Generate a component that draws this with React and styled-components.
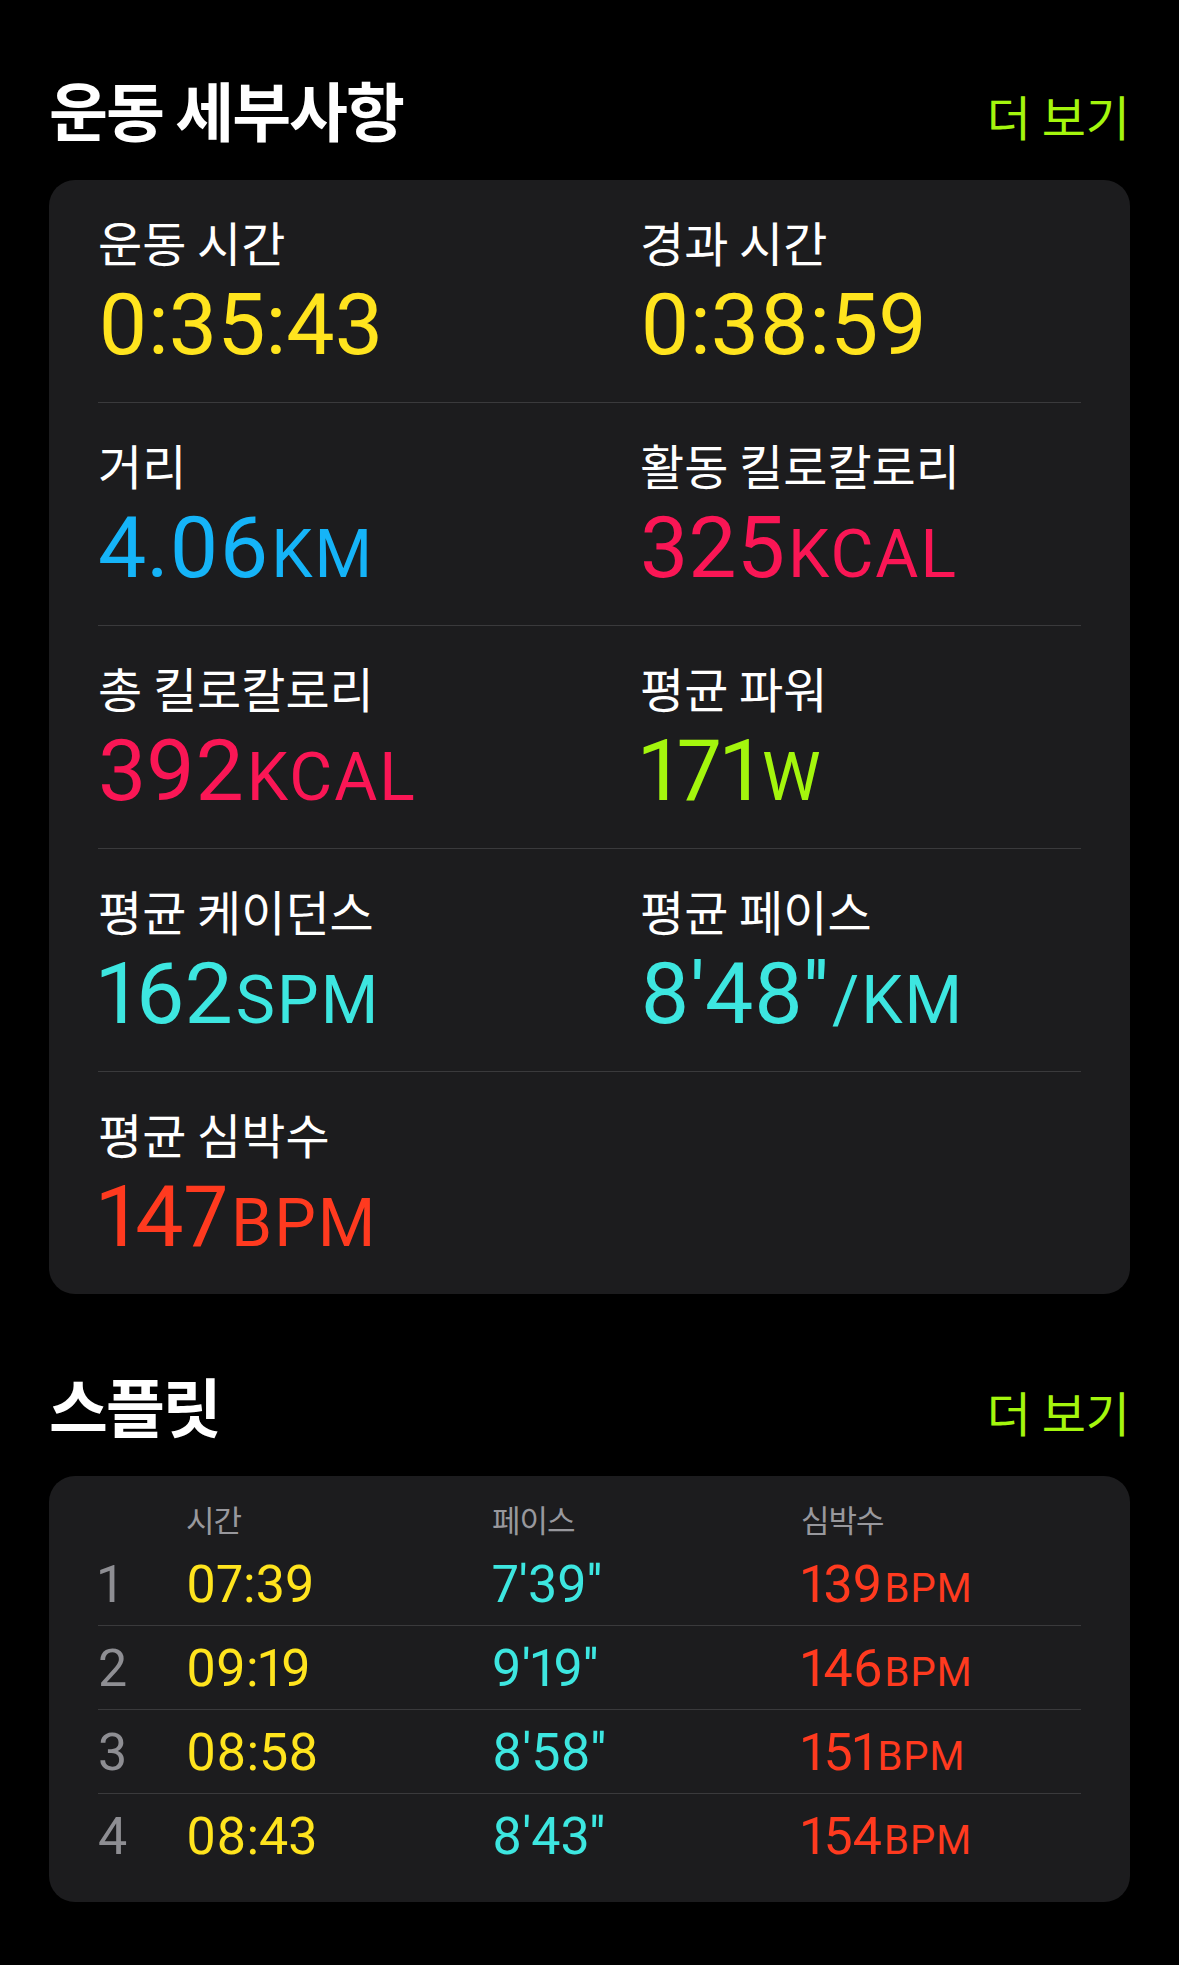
import React from "react";
import styled, { createGlobalStyle } from "styled-components";

const GlobalStyle = createGlobalStyle`
  html, body {
    margin: 0;
    padding: 0;
    background: #000;
  }
  body {
    font-family: "Noto Sans CJK KR", "Noto Sans", sans-serif;
    color: #fff;
    -webkit-font-smoothing: antialiased;
  }
`;

const COLORS = {
  yellow: "#FFE41E",
  blue: "#15B4F8",
  pink: "#FA1655",
  lime: "#A4F60D",
  cyan: "#3DE6E0",
  red: "#FF3A1F",
};

const Page = styled.div`
  width: 1179px;
  min-height: 1965px;
  box-sizing: border-box;
  padding: 70px 49px 0 49px;
  background: #000;
`;

const Section = styled.section`
  display: flex;
  flex-direction: column;
  gap: 34px;
  & + & {
    margin-top: 72px;
  }
`;

const SectionHeader = styled.header`
  display: flex;
  justify-content: space-between;
  align-items: baseline;
  height: 76px;
`;

const Title = styled.h2`
  margin: 0;
  font-family: "Noto Sans CJK KR", sans-serif;
  font-weight: 700;
  font-size: 64px;
  line-height: 76px;
  letter-spacing: -2px;
  color: #fff;
`;

const MoreLink = styled.a`
  font-family: "Noto Sans CJK KR", sans-serif;
  font-weight: 400;
  font-size: 48px;
  line-height: 76px;
  letter-spacing: 0;
  color: ${COLORS.lime};
  text-decoration: none;
`;

const Card = styled.div`
  background: #1c1c1e;
  border-radius: 26px;
  padding: ${(p) => p.$padding || "0 49px"};
`;

const MetricGrid = styled.div`
  display: grid;
  grid-template-columns: 542px 1fr;
`;

const MetricRow = styled.div`
  grid-column: 1 / -1;
  display: grid;
  grid-template-columns: subgrid;
  padding: 35px 0 31px;
  & + & {
    border-top: 1px solid #3a3a3c;
  }
`;

const Metric = styled.div`
  display: flex;
  flex-direction: column;
  gap: 12px;
`;

const MetricLabel = styled.div`
  font-family: "Noto Sans CJK KR", sans-serif;
  font-size: 48px;
  line-height: 52px;
  letter-spacing: 0;
  color: #fff;
  white-space: nowrap;
`;

const MetricValue = styled.div`
  font-family: Roboto, "Liberation Sans", sans-serif;
  font-size: 86px;
  line-height: 92px;
  height: 92px;
  letter-spacing: 0;
  font-variant-numeric: proportional-nums;
  color: ${(p) => p.$color};
  white-space: nowrap;
`;

const Unit = styled.span`
  font-family: Roboto, "Liberation Sans", sans-serif;
  font-size: ${(p) => p.$size || 66}px;
  line-height: 0;
  letter-spacing: ${(p) => p.$tracking ?? 2}px;
  margin-left: ${(p) => p.$gap || 3}px;
`;

const SplitGrid = styled.div`
  display: grid;
  grid-template-columns: 88px 306px 309px 1fr;
`;

const SplitHeaderRow = styled.div`
  grid-column: 1 / -1;
  display: grid;
  grid-template-columns: subgrid;
  padding: 25px 0 5px;
  height: 36px;
`;

const HeaderCell = styled.div`
  font-family: "Noto Sans CJK KR", sans-serif;
  font-size: 31px;
  line-height: 36px;
  letter-spacing: -1px;
  color: #98989d;
`;

const SplitRow = styled.div`
  grid-column: 1 / -1;
  display: grid;
  grid-template-columns: subgrid;
  padding-top: 3px;
  height: 80px;
  & + & {
    border-top: 1px solid #3a3a3c;
  }
`;

const SplitCell = styled.div`
  font-family: Roboto, "Liberation Sans", sans-serif;
  font-size: 52px;
  line-height: 80px;
  letter-spacing: 0;
  font-variant-numeric: proportional-nums;
  color: ${(p) => p.$color || "#8e8e93"};
  white-space: nowrap;
`;

const metrics = [
  [
    { label: "운동 시간", value: "0:35:43", color: COLORS.yellow },
    { label: "경과 시간", value: "0:38:59", color: COLORS.yellow },
  ],
  [
    { label: "거리", value: "4.06", unit: "KM", color: COLORS.blue },
    { label: "활동 킬로칼로리", value: "325", unit: "KCAL", color: COLORS.pink },
  ],
  [
    { label: "총 킬로칼로리", value: "392", unit: "KCAL", color: COLORS.pink },
    { label: "평균 파워", value: "171", unit: "W", color: COLORS.lime },
  ],
  [
    { label: "평균 케이던스", value: "162", unit: "SPM", color: COLORS.cyan },
    { label: "평균 페이스", value: "8'48''", unit: "/KM", color: COLORS.cyan },
  ],
  [{ label: "평균 심박수", value: "147", unit: "BPM", color: COLORS.red }],
];

const splits = [
  { n: "1", time: "07:39", pace: "7'39''", hr: "139" },
  { n: "2", time: "09:19", pace: "9'19''", hr: "146" },
  { n: "3", time: "08:58", pace: "8'58''", hr: "151" },
  { n: "4", time: "08:43", pace: "8'43''", hr: "154" },
];

export default function App() {
  return (
    <>
      <GlobalStyle />
      <Page>
        <Section>
          <SectionHeader>
            <Title>운동 세부사항</Title>
            <MoreLink>더 보기</MoreLink>
          </SectionHeader>
          <Card>
            <MetricGrid>
              {metrics.map((row, i) => (
                <MetricRow key={i}>
                  {row.map((m) => (
                    <Metric key={m.label}>
                      <MetricLabel>{m.label}</MetricLabel>
                      <MetricValue $color={m.color}>
                        {m.value}
                        {m.unit && <Unit>{m.unit}</Unit>}
                      </MetricValue>
                    </Metric>
                  ))}
                </MetricRow>
              ))}
            </MetricGrid>
          </Card>
        </Section>

        <Section>
          <SectionHeader>
            <Title>스플릿</Title>
            <MoreLink>더 보기</MoreLink>
          </SectionHeader>
          <Card $padding="0 49px 25px">
            <SplitGrid>
              <SplitHeaderRow>
                <span />
                <HeaderCell>시간</HeaderCell>
                <HeaderCell>페이스</HeaderCell>
                <HeaderCell>심박수</HeaderCell>
              </SplitHeaderRow>
              {splits.map((s) => (
                <SplitRow key={s.n}>
                  <SplitCell>{s.n}</SplitCell>
                  <SplitCell $color={COLORS.yellow}>{s.time}</SplitCell>
                  <SplitCell $color={COLORS.cyan}>{s.pace}</SplitCell>
                  <SplitCell $color={COLORS.red}>
                    {s.hr}
                    <Unit $size={40} $gap={2} $tracking={1}>BPM</Unit>
                  </SplitCell>
                </SplitRow>
              ))}
            </SplitGrid>
          </Card>
        </Section>
      </Page>
    </>
  );
}
